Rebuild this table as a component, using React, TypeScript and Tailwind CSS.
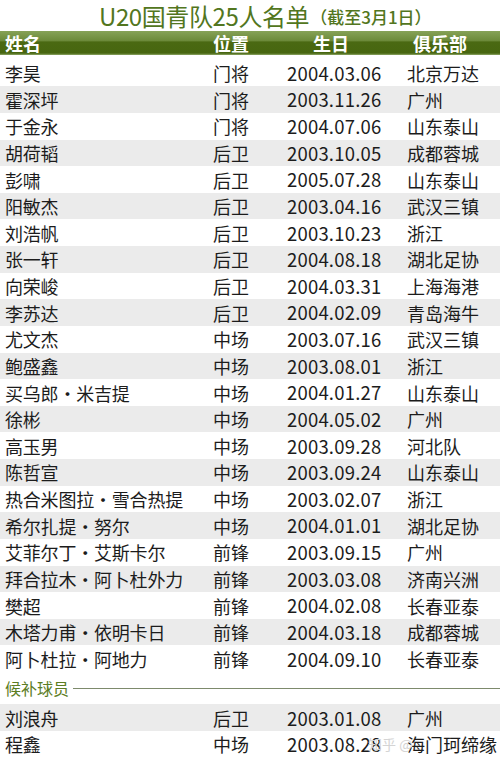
import React from "react";

type P = [string, string, string, string];

const players: P[] = [
  ["李昊", "门将", "2004.03.06", "北京万达"],
  ["霍深坪", "门将", "2003.11.26", "广州"],
  ["于金永", "门将", "2004.07.06", "山东泰山"],
  ["胡荷韬", "后卫", "2003.10.05", "成都蓉城"],
  ["彭啸", "后卫", "2005.07.28", "山东泰山"],
  ["阳敏杰", "后卫", "2003.04.16", "武汉三镇"],
  ["刘浩帆", "后卫", "2003.10.23", "浙江"],
  ["张一轩", "后卫", "2004.08.18", "湖北足协"],
  ["向荣峻", "后卫", "2004.03.31", "上海海港"],
  ["李苏达", "后卫", "2004.02.09", "青岛海牛"],
  ["尤文杰", "中场", "2003.07.16", "武汉三镇"],
  ["鲍盛鑫", "中场", "2003.08.01", "浙江"],
  ["买乌郎·米吉提", "中场", "2004.01.27", "山东泰山"],
  ["徐彬", "中场", "2004.05.02", "广州"],
  ["高玉男", "中场", "2003.09.28", "河北队"],
  ["陈哲宣", "中场", "2003.09.24", "山东泰山"],
  ["热合米图拉·雪合热提", "中场", "2003.02.07", "浙江"],
  ["希尔扎提·努尔", "中场", "2004.01.01", "湖北足协"],
  ["艾菲尔丁·艾斯卡尔", "前锋", "2003.09.15", "广州"],
  ["拜合拉木·阿卜杜外力", "前锋", "2003.03.08", "济南兴洲"],
  ["樊超", "前锋", "2004.02.08", "长春亚泰"],
  ["木塔力甫·依明卡日", "前锋", "2004.03.18", "成都蓉城"],
  ["阿卜杜拉·阿地力", "前锋", "2004.09.10", "长春亚泰"],
];

const subs: P[] = [
  ["刘浪舟", "后卫", "2003.01.08", "广州"],
  ["程鑫", "中场", "2003.08.28", "海门珂缔缘"],
];

function Row({ p, gray }: { p: P; gray: boolean }) {
  return (
    <div
      className={`flex h-[26.64px] items-center text-[18px] leading-none text-[#1c1c1c] ${
        gray ? "bg-[#ebebeb]" : "bg-white"
      }`}
    >
      <div className="w-[213px] shrink-0 whitespace-nowrap pl-[5px] tracking-[-0.2px]">{p[0]}</div>
      <div className="w-[74px] shrink-0">{p[1]}</div>
      <div className="w-[120px] shrink-0 text-[18.5px] tracking-[0.2px]">{p[2]}</div>
      <div className="shrink-0 whitespace-nowrap">{p[3]}</div>
    </div>
  );
}

export default function App() {
  return (
    <div
      className="relative h-[759px] w-[500px] overflow-hidden bg-white"
      style={{ fontFamily: '"Noto Sans CJK SC", "Noto Sans", sans-serif' }}
    >
      <div className="flex h-[31px] items-center pl-[99px]">
        <span className="text-[24px] leading-[30px] text-[#527620] tracking-[-0.4px]">
          U20国青队25人名单
        </span>
        <span className="ml-[1px] mt-[2px] text-[17px] leading-[26px] font-medium text-[#527620]">
          （截至3月1日）
        </span>
      </div>
      <div className="flex h-[24px] items-center bg-[linear-gradient(to_bottom,#86a257_0%,#6c8a3a_40%,#4a6912_46%,#476610_92%,#8ea766_100%)] text-[18px] font-bold leading-none text-white">
        <div className="w-[213px] shrink-0 pl-[5px]">姓名</div>
        <div className="w-[100px] shrink-0">位置</div>
        <div className="w-[100px] shrink-0">生日</div>
        <div className="shrink-0">俱乐部</div>
      </div>
      <div className="h-[4.7px]" />
      {players.map((p, i) => (
        <Row key={p[0]} p={p} gray={i % 2 === 1} />
      ))}
      <div className="flex h-[32.4px] items-center pl-[5px]">
        <span className="text-[16px] leading-none text-[#5c7d24]">候补球员</span>
        <div className="ml-[4px] h-px flex-1 bg-[#7d8a6c]" />
      </div>
      {subs.map((p, i) => (
        <Row key={p[0]} p={p} gray={i % 2 === 0} />
      ))}
      <div className="pointer-events-none absolute left-[368px] top-[737px] whitespace-nowrap text-[14px] leading-none text-[#d4d4d4]">
        知乎 @
      </div>
    </div>
  );
}
